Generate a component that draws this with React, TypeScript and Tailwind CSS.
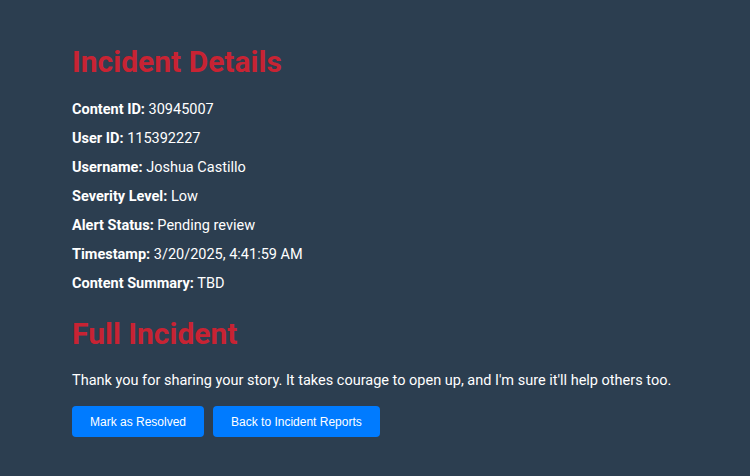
export default function App() {
  const details: [string, string][] = [
    ['Content ID', '30945007'],
    ['User ID', '115392227'],
    ['Username', 'Joshua Castillo'],
    ['Severity Level', 'Low'],
    ['Alert Status', 'Pending review'],
    ['Timestamp', '3/20/2025, 4:41:59 AM'],
    ['Content Summary', 'TBD'],
  ];

  return (
    <div
      className="min-h-screen bg-[#2c3e50] text-white"
      style={{ fontFamily: 'Roboto, "Noto Sans", sans-serif' }}
    >
      <div className="flex flex-col px-[72px] pt-[45px]">
        <h1 className="mb-[20px] text-[30px] leading-[34px] font-bold text-[#c82333]">
          Incident Details
        </h1>
        <div className="flex flex-col gap-[8px]">
          {details.map(([label, value]) => (
            <p key={label} className="text-[14.5px] leading-[21px]">
              <strong className="font-bold">{label}:</strong> {value}
            </p>
          ))}
        </div>
        <h1 className="mt-[23px] mb-[19px] text-[30px] leading-[34px] font-bold text-[#c82333]">
          Full Incident
        </h1>
        <p className="text-[14.5px] leading-[21px]">
          Thank you for sharing your story. It takes courage to open up, and I'm
          sure it'll help others too.
        </p>
        <div
          className="mt-[15px] flex gap-[9px]"
          style={{ fontFamily: '"Liberation Sans", Arial, sans-serif' }}
        >
          <button className="h-[31px] rounded-[4px] bg-[#007bff] px-[18px] text-[12px] text-white">
            Mark as Resolved
          </button>
          <button className="h-[31px] rounded-[4px] bg-[#007bff] px-[18px] text-[12px] text-white">
            Back to Incident Reports
          </button>
        </div>
      </div>
    </div>
  );
}
